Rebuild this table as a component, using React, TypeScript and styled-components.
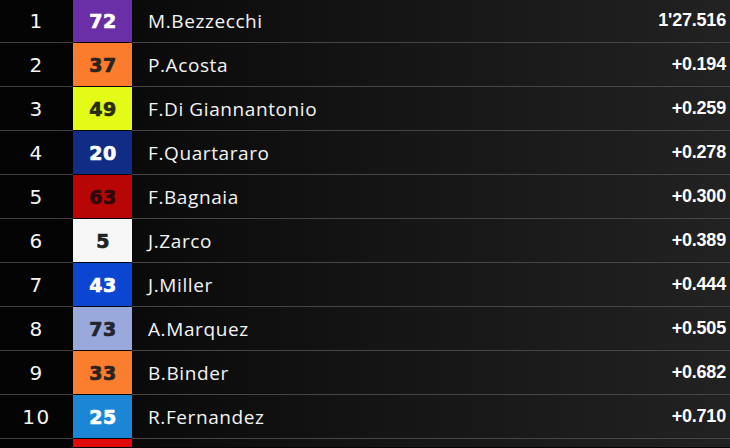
import { createGlobalStyle, styled } from "styled-components";

const GlobalStyle = createGlobalStyle`
  html, body {
    margin: 0;
    padding: 0;
    background: #050505;
    overflow: hidden;
  }
`;

type Rider = {
  pos: number;
  num: string;
  name: string;
  gap: string;
  bg: string;
  fg: string;
};

const riders: Rider[] = [
  { pos: 1, num: "72", name: "M.Bezzecchi", gap: "1'27.516", bg: "#6a2ea6", fg: "#ffffff" },
  { pos: 2, num: "37", name: "P.Acosta", gap: "+0.194", bg: "#fb7c2c", fg: "#2a2420" },
  { pos: 3, num: "49", name: "F.Di Giannantonio", gap: "+0.259", bg: "#e4fb17", fg: "#2a2c10" },
  { pos: 4, num: "20", name: "F.Quartararo", gap: "+0.278", bg: "#102c84", fg: "#ffffff" },
  { pos: 5, num: "63", name: "F.Bagnaia", gap: "+0.300", bg: "#b80606", fg: "#2e0a0a" },
  { pos: 6, num: "5", name: "J.Zarco", gap: "+0.389", bg: "#f7f7f7", fg: "#222222" },
  { pos: 7, num: "43", name: "J.Miller", gap: "+0.444", bg: "#0a46d2", fg: "#ffffff" },
  { pos: 8, num: "73", name: "A.Marquez", gap: "+0.505", bg: "#9aa9dc", fg: "#22242e" },
  { pos: 9, num: "33", name: "B.Binder", gap: "+0.682", bg: "#fb7e2e", fg: "#2a2420" },
  { pos: 10, num: "25", name: "R.Fernandez", gap: "+0.710", bg: "#1b86d6", fg: "#ffffff" },
  { pos: 11, num: "", name: "", gap: "", bg: "#e00a0a", fg: "#ffffff" },
];

const Board = styled.div`
  width: 730px;
  height: 448px;
  overflow: hidden;
  margin-top: -1px;
  display: flex;
  flex-direction: column;
`;

const Row = styled.div`
  display: grid;
  grid-template-columns: 73px 59px 1fr;
  height: 44px;
  flex-shrink: 0;
`;

const Position = styled.div`
  display: flex;
  align-items: center;
  justify-content: center;
  background: #040404;
  border-bottom: 1px solid #3e3e3e;
  color: #f4f4f4;
  font-family: "DejaVu Sans", sans-serif;
  font-weight: 400;
  font-size: 20px;
  letter-spacing: 1.5px;
  padding-top: 1px;
`;

const NumberBox = styled.div<{ $bg: string; $fg: string }>`
  display: flex;
  align-items: center;
  justify-content: center;
  background: ${({ $bg }) => $bg};
  color: ${({ $fg }) => $fg};
  border-bottom: 1px solid #050505;
  font-family: "DejaVu Sans", sans-serif;
  font-weight: 700;
  font-size: 19px;
  letter-spacing: 0.5px;
  -webkit-text-stroke: 0.7px currentColor;
  padding: 1px 0 0 1px;
`;

const Info = styled.div`
  display: flex;
  align-items: center;
  justify-content: space-between;
  padding: 0 4px 0 16px;
  background: linear-gradient(90deg, #0a0a0a 0%, #141414 40%, #222222 100%);
  border-bottom: 1px solid #464646;
`;

const Name = styled.span`
  color: #f4f4f4;
  font-family: "Open Sans", sans-serif;
  font-weight: 500;
  font-size: 19px;
  letter-spacing: 0.6px;
`;

const Gap = styled.span`
  color: #ffffff;
  font-family: "Liberation Sans", Arial, sans-serif;
  font-weight: 700;
  font-size: 18px;
  letter-spacing: -0.2px;
`;

export default function App() {
  return (
    <>
      <GlobalStyle />
      <Board>
        {riders.map((r) => (
          <Row key={r.pos}>
            <Position>{r.num ? r.pos : ""}</Position>
            <NumberBox $bg={r.bg} $fg={r.fg}>
              {r.num}
            </NumberBox>
            <Info>
              <Name>{r.name}</Name>
              <Gap>{r.gap}</Gap>
            </Info>
          </Row>
        ))}
      </Board>
    </>
  );
}
